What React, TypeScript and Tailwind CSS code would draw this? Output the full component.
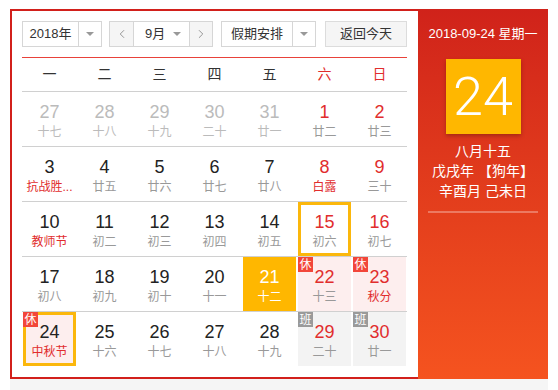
import React from "react";
import { ChevronLeft, ChevronRight } from "lucide-react";

type Cell = {
  day: number;
  lunar: string;
  other?: boolean;
  weekend?: boolean;
  fest?: boolean;
  tag?: "休" | "班";
  selected?: boolean;
  today?: boolean;
  hover?: boolean;
};

const rows: Cell[][] = [
  [
    { day: 27, lunar: "十七", other: true },
    { day: 28, lunar: "十八", other: true },
    { day: 29, lunar: "十九", other: true },
    { day: 30, lunar: "二十", other: true },
    { day: 31, lunar: "廿一", other: true },
    { day: 1, lunar: "廿二", weekend: true },
    { day: 2, lunar: "廿三", weekend: true },
  ],
  [
    { day: 3, lunar: "抗战胜...", fest: true },
    { day: 4, lunar: "廿五" },
    { day: 5, lunar: "廿六" },
    { day: 6, lunar: "廿七" },
    { day: 7, lunar: "廿八" },
    { day: 8, lunar: "白露", weekend: true, fest: true },
    { day: 9, lunar: "三十", weekend: true },
  ],
  [
    { day: 10, lunar: "教师节", fest: true },
    { day: 11, lunar: "初二" },
    { day: 12, lunar: "初三" },
    { day: 13, lunar: "初四" },
    { day: 14, lunar: "初五" },
    { day: 15, lunar: "初六", weekend: true, selected: true },
    { day: 16, lunar: "初七", weekend: true },
  ],
  [
    { day: 17, lunar: "初八" },
    { day: 18, lunar: "初九" },
    { day: 19, lunar: "初十" },
    { day: 20, lunar: "十一" },
    { day: 21, lunar: "十二", hover: true },
    { day: 22, lunar: "十三", weekend: true, tag: "休" },
    { day: 23, lunar: "秋分", weekend: true, tag: "休", fest: true },
  ],
  [
    { day: 24, lunar: "中秋节", tag: "休", today: true, fest: true },
    { day: 25, lunar: "十六" },
    { day: 26, lunar: "十七" },
    { day: 27, lunar: "十八" },
    { day: 28, lunar: "十九" },
    { day: 29, lunar: "二十", weekend: true, tag: "班" },
    { day: 30, lunar: "廿一", weekend: true, tag: "班" },
  ],
];

const weekdays = ["一", "二", "三", "四", "五", "六", "日"];

const Caret = () => (
  <span className="w-0 h-0 border-l-[4px] border-r-[4px] border-t-[4px] border-l-transparent border-r-transparent border-t-[#999]" />
);

const DayCell = ({ c }: { c: Cell }) => {
  let bg = "bg-white";
  if (c.tag === "休") bg = "bg-[#fdeeee]";
  if (c.tag === "班") bg = "bg-[#f3f3f3]";
  if (c.hover) bg = "bg-[#ffb700]";

  let numColor = "text-[#222]";
  if (c.weekend) numColor = "text-[#e12d2d]";
  if (c.other) numColor = "text-[#bbb]";
  if (c.hover) numColor = "text-white";

  let lunarColor = "text-[#999]";
  if (c.fest) lunarColor = "text-[#e12d2d]";
  if (c.other) lunarColor = "text-[#bbb]";
  if (c.hover) lunarColor = "text-white";

  const ring = c.selected || c.today ? "border-[3px] border-[#fbb70c]" : "";

  return (
    <div className={`relative h-[54px] mx-[1px] ${bg} ${ring} flex flex-col items-center ${ring ? "pt-[7px]" : "pt-[10px]"}`}>
      {c.tag && (
        <span
          className={`absolute ${ring ? "-left-[3px] -top-[3px]" : "left-0 top-0"} w-[15px] h-[15px] flex items-center justify-center text-[12px] leading-none text-white ${
            c.tag === "休" ? "bg-[#f2463a]" : "bg-[#9a9a9a]"
          }`}
        >
          {c.tag}
        </span>
      )}
      <span className={`text-[18px] leading-[20px] ${numColor}`}>{c.day}</span>
      <span className={`mt-[2px] text-[12px] leading-[16px] ${lunarColor}`}>{c.lunar}</span>
    </div>
  );
};

const App = () => {
  return (
    <div
      className="w-[558px] h-[390px] bg-white pt-[9px] pl-[10px]"
      style={{ fontFamily: '"Liberation Sans", "Noto Sans CJK SC", sans-serif' }}
    >
      <div className="w-[538px]">
        <div className="flex h-[370px]">
          <div className="w-[408px] border-l-2 border-t-2 border-b-2 border-[#d2201b] pl-[10px] pr-[11px] pt-[10px]">
            <div className="flex items-center h-[26px] text-[13px] text-[#333]">
              <div className="flex h-full w-[80px] border border-[#d6d6d6]">
                <div className="flex-1 flex items-center justify-center">2018年</div>
                <div className="w-[23px] border-l border-[#d6d6d6] flex items-center justify-center">
                  <Caret />
                </div>
              </div>
              <div className="flex h-full w-[104px] ml-[7px] border border-[#d6d6d6]">
                <div className="w-[23px] bg-[#f5f5f5] flex items-center justify-center text-[#888]">
                  <ChevronLeft size={14} strokeWidth={1.5} />
                </div>
                <div className="flex-1 flex items-center border-l border-r border-[#d6d6d6] pl-[11px] pr-[8px]">
                  <span className="flex-1">9月</span>
                  <Caret />
                </div>
                <div className="w-[22px] bg-[#f5f5f5] flex items-center justify-center text-[#888]">
                  <ChevronRight size={14} strokeWidth={1.5} />
                </div>
              </div>
              <div className="flex h-full w-[95px] ml-[8px] border border-[#d6d6d6]">
                <div className="flex-1 flex items-center justify-center">假期安排</div>
                <div className="w-[23px] border-l border-[#d6d6d6] flex items-center justify-center">
                  <Caret />
                </div>
              </div>
              <div className="flex h-full w-[82px] ml-auto items-center justify-center border border-[#dcdcdc] bg-[#f5f5f5]">
                返回今天
              </div>
            </div>

            <div className="mt-[10px] h-px bg-[#e8423a]" />
            <div className="grid grid-cols-7 h-[33px] items-center text-[14px] text-[#333]">
              {weekdays.map((w, i) => (
                <div key={w} className={`text-center ${i >= 5 ? "text-[#e12d2d]" : ""}`}>
                  {w}
                </div>
              ))}
            </div>

            {rows.map((r, i) => (
              <div key={i} className="border-t border-[#d0d0d0] grid grid-cols-7">
                {r.map((c, j) => (
                  <DayCell key={j} c={c} />
                ))}
              </div>
            ))}
          </div>

          <div className="w-[130px] bg-gradient-to-b from-[#d0221a] to-[#f5531f] flex flex-col items-center text-white pt-[17px]">
            <div className="text-[13px] leading-[16px]">2018-09-24 星期一</div>
            <div className="mt-[17px] w-[75px] h-[75px] bg-[#ffb700] shadow-[0_2px_4px_rgba(0,0,0,0.25)] flex items-center justify-center">
              <span className="text-[54px] leading-none font-light" style={{ fontFamily: "Roboto, sans-serif" }}>
                24
              </span>
            </div>
            <div className="mt-[7px] text-[14px] leading-[20px] text-center">
              <div>八月十五</div>
              <div>戊戌年 【狗年】</div>
              <div>辛酉月 己未日</div>
            </div>
            <div className="mt-[10px] w-[110px] h-[2px] bg-white/30" />
          </div>
        </div>
        <div className="h-[11px] bg-[#f5f5f5]" />
      </div>
    </div>
  );
};

export default App;
